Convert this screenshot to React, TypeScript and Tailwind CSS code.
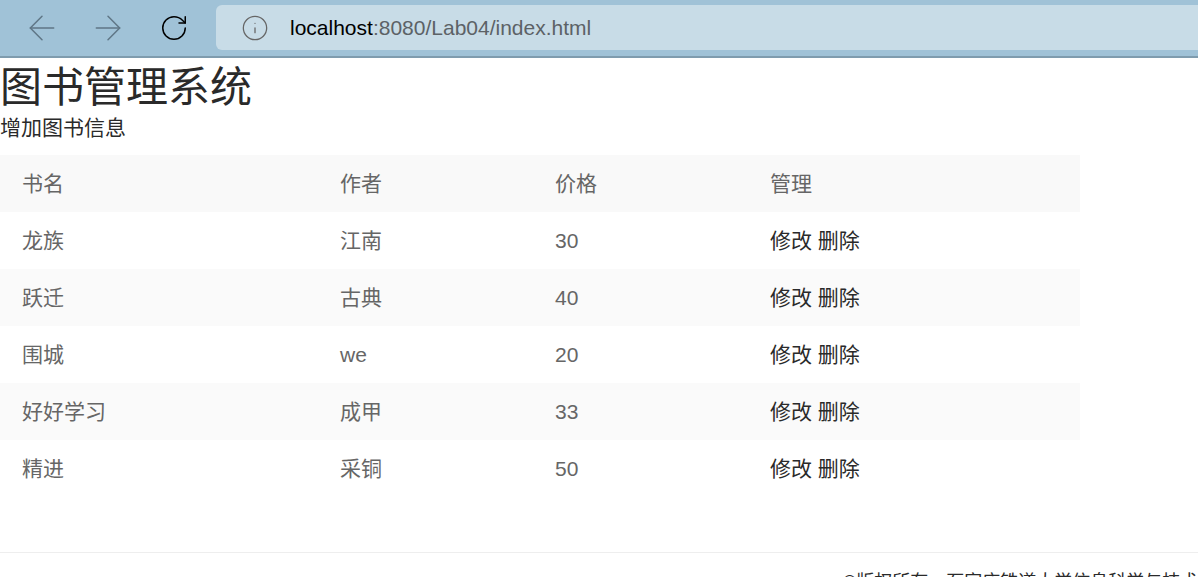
import { ArrowLeft, ArrowRight, Info, RotateCw } from "lucide-react";

const books = [
  { name: "龙族", author: "江南", price: 30 },
  { name: "跃迁", author: "古典", price: 40 },
  { name: "围城", author: "we", price: 20 },
  { name: "好好学习", author: "成甲", price: 33 },
  { name: "精进", author: "采铜", price: 50 },
];

const font = "font-['Liberation_Sans','Noto_Sans_CJK_SC',sans-serif]";

function BrowserBar() {
  return (
    <div className="flex h-[58px] items-start border-b-2 border-[#7f9cae] bg-[#a0c2d7] pt-[5px]">
      <div className="flex h-[45px] w-[216px] shrink-0 items-center">
        <ArrowLeft className="ml-[22px] h-[40px] w-[40px] text-[#5f7686]" strokeWidth={0.9} />
        <ArrowRight className="ml-[26px] h-[40px] w-[40px] text-[#5f7686]" strokeWidth={0.9} />
        <RotateCw className="ml-[31px] h-[30px] w-[30px] text-black" strokeWidth={1.2} />
      </div>
      <div className="flex h-[45px] flex-1 items-center rounded-l-[6px] bg-[#c8dce7]">
        <Info className="ml-[25px] h-[28px] w-[28px] text-[#666666]" strokeWidth={1.1} />
        <span className="ml-[21px] text-[21px] text-[#5c6266]">
          <span className="text-black">localhost</span>:8080/Lab04/index.html
        </span>
      </div>
    </div>
  );
}

export default function App() {
  return (
    <div className={`${font} h-[577px] w-[1198px] overflow-hidden bg-white text-[#2a2a2a]`}>
      <BrowserBar />
      <h1 className="h-[59px] text-[42px] leading-[59px]">图书管理系统</h1>
      <a className="block h-[21px] text-[21px] leading-[21px]">增加图书信息</a>
      <table className="mt-[17px] w-[1080px] table-fixed border-collapse text-[21px] text-[#666666]">
        <colgroup>
          <col className="w-[318px]" />
          <col className="w-[215px]" />
          <col className="w-[215px]" />
          <col className="w-[332px]" />
        </colgroup>
        <thead>
          <tr className="h-[57px] bg-[#f9f9f9]">
            <th className="pl-[22px] text-left font-normal">书名</th>
            <th className="pl-[22px] text-left font-normal">作者</th>
            <th className="pl-[22px] text-left font-normal">价格</th>
            <th className="pl-[22px] text-left font-normal">管理</th>
          </tr>
        </thead>
        <tbody>
          {books.map((b, i) => (
            <tr key={b.name} className={i % 2 === 1 ? "h-[57px] bg-[#fafafa]" : "h-[57px] bg-white"}>
              <td className="pl-[22px]">{b.name}</td>
              <td className="pl-[22px]">{b.author}</td>
              <td className="pl-[22px]">{b.price}</td>
              <td className="pl-[22px] text-[#2a2a2a]">
                <a>修改</a> <a>删除</a>
              </td>
            </tr>
          ))}
        </tbody>
      </table>
      <footer className="mt-[55px] border-t border-[#eeeeee] pl-[843px] pt-[17px] text-[18px] leading-[24px] whitespace-nowrap">
        ©版权所有，石家庄铁道大学信息科学与技术学院
      </footer>
    </div>
  );
}
